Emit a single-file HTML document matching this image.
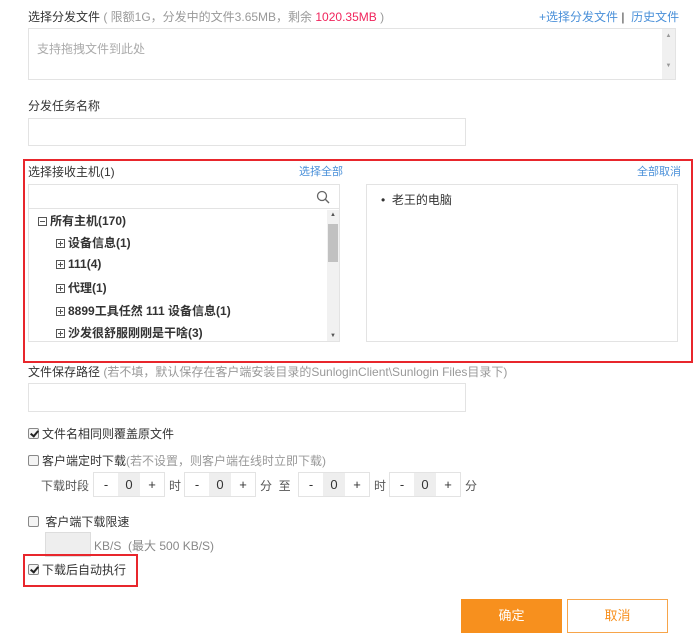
<!DOCTYPE html>
<html><head><meta charset="utf-8"><style>
*{box-sizing:border-box;margin:0;padding:0}
body{width:700px;height:642px;background:#fff;font-family:"Liberation Sans","Noto Sans CJK SC",sans-serif;font-size:12px;color:#333;position:relative;overflow:hidden}
.a{position:absolute;white-space:nowrap}
.box{position:absolute;border:1px solid #e3e3e3;background:#fff}
.g{color:#999}
.b{color:#4a90d9}
.red{position:absolute;border:2px solid #e8262c}
.cb{display:inline-block;width:11px;height:11px;border:1px solid #888;border-radius:2px;vertical-align:-1px;margin-right:3px;background:#f4f4f4;position:relative}
.cb.on::after{content:"";position:absolute;left:3px;top:0px;width:3px;height:6px;border:solid #222;border-width:0 2px 2px 0;transform:rotate(40deg)}
.st{position:absolute;top:472px;height:25px;width:72px;border:1px solid #e3e3e3;display:flex;font-size:13px}
.st span{flex:1;text-align:center;line-height:23px}
.st span.v{background:#eee;flex:0 0 22px}
.tr{position:absolute;font-weight:bold;font-size:12px}
.pl{display:inline-block;width:9px;height:9px;border:1px solid #555;position:relative;margin-right:3px;vertical-align:-1px}
.pl::before{content:"";position:absolute;left:1px;right:1px;top:3px;height:1px;background:#555}
.pl.p::after{content:"";position:absolute;top:1px;bottom:1px;left:3px;width:1px;background:#555}
</style></head><body>
<div class="a" style="left:28px;top:8px">选择分发文件 <span class="g">( 限额1G，分发中的文件3.65MB，剩余 <span style="color:#f0245c">1020.35MB</span> )</span></div>
<div class="a b" style="left:539px;top:8px">+选择分发文件 <span style="color:#333">|</span>&nbsp; 历史文件</div>
<div class="box" style="left:28px;top:28px;width:648px;height:52px"><div class="a g" style="left:8px;top:11px;color:#aaa">支持拖拽文件到此处</div><div style="position:absolute;right:0;top:0;width:13px;height:50px;background:#f0f0f0;font-size:6px;color:#999;text-align:center"><div style="margin-top:4px">▲</div><div style="margin-top:24px">▼</div></div></div>
<div class="a" style="left:28px;top:97px">分发任务名称</div>
<div class="box" style="left:28px;top:118px;width:438px;height:28px"></div>
<div class="red" style="left:23px;top:159px;width:670px;height:204px"></div>
<div class="a" style="left:28px;top:163px">选择接收主机(1)</div>
<div class="a b" style="left:299px;top:163px;font-size:11px">选择全部</div>
<div class="a b" style="left:637px;top:163px;font-size:11px">全部取消</div>
<div class="box" style="left:28px;top:184px;width:312px;height:158px">
<div style="height:24px;border-bottom:1px solid #e3e3e3;position:relative"><svg style="position:absolute;right:9px;top:5px" width="14" height="14" viewBox="0 0 14 14"><circle cx="6" cy="6" r="4.5" fill="none" stroke="#666" stroke-width="1.3"/><path d="M9.3 9.3L13 13" stroke="#666" stroke-width="1.4"/></svg></div>
<div style="position:absolute;left:298px;top:25px;width:12px;height:131px;background:#f1f1f1;font-size:6px;color:#555;text-align:center"><div style="margin-top:2px">▲</div><div style="position:absolute;top:14px;left:1px;width:10px;height:38px;background:#c1c1c1"></div><div style="position:absolute;bottom:2px;width:12px">▼</div></div>
</div>
<div class="tr" style="left:38px;top:212px"><span class="pl"></span>所有主机(170)</div>
<div class="tr" style="left:56px;top:234px"><span class="pl p"></span>设备信息(1)</div>
<div class="tr" style="left:56px;top:257px"><span class="pl p"></span>111(4)</div>
<div class="tr" style="left:56px;top:279px"><span class="pl p"></span>代理(1)</div>
<div class="tr" style="left:56px;top:302px"><span class="pl p"></span>8899工具任然 111 设备信息(1)</div>
<div class="tr" style="left:56px;top:324px"><span class="pl p"></span>沙发很舒服刚刚是干啥(3)</div>
<div class="box" style="left:366px;top:184px;width:312px;height:158px"></div>
<div class="a" style="left:381px;top:191px">•&nbsp; 老王的电脑</div>
<div class="a" style="left:28px;top:363px">文件保存路径 <span class="g">(若不填，默认保存在客户端安装目录的SunloginClient\Sunlogin Files目录下)</span></div>
<div class="box" style="left:28px;top:383px;width:438px;height:29px"></div>
<div class="a" style="left:28px;top:425px"><span class="cb on"></span>文件名相同则覆盖原文件</div>
<div class="a" style="left:28px;top:452px"><span class="cb"></span>客户端定时下载<span class="g">(若不设置，则客户端在线时立即下载)</span></div>
<div class="a" style="left:41px;top:477px;color:#555">下载时段</div>
<div class="st" style="left:93px"><span>-</span><span class="v">0</span><span>+</span></div>
<div class="a" style="left:169px;top:477px;color:#555">时</div>
<div class="st" style="left:184px"><span>-</span><span class="v">0</span><span>+</span></div>
<div class="a" style="left:260px;top:477px;color:#555">分 &nbsp;至</div>
<div class="st" style="left:298px"><span>-</span><span class="v">0</span><span>+</span></div>
<div class="a" style="left:374px;top:477px;color:#555">时</div>
<div class="st" style="left:389px"><span>-</span><span class="v">0</span><span>+</span></div>
<div class="a" style="left:465px;top:477px;color:#555">分</div>
<div class="a" style="left:28px;top:513px"><span class="cb"></span> 客户端下载限速</div>
<div style="position:absolute;left:45px;top:532px;width:46px;height:25px;background:#eee;border:1px solid #ddd"></div>
<div class="a g" style="left:94px;top:537px;color:#888">KB/S &nbsp;(最大 500 KB/S)</div>
<div class="red" style="left:23px;top:554px;width:115px;height:33px"></div>
<div class="a" style="left:28px;top:561px"><span class="cb on"></span>下载后自动执行</div>
<div style="position:absolute;left:461px;top:599px;width:101px;height:34px;background:#f7901e;color:#fff;text-align:center;line-height:34px;font-size:13px">确定</div>
<div style="position:absolute;left:567px;top:599px;width:101px;height:34px;border:1px solid #f7a54a;color:#f7901e;text-align:center;line-height:32px;font-size:13px">取消</div>
</body></html>
